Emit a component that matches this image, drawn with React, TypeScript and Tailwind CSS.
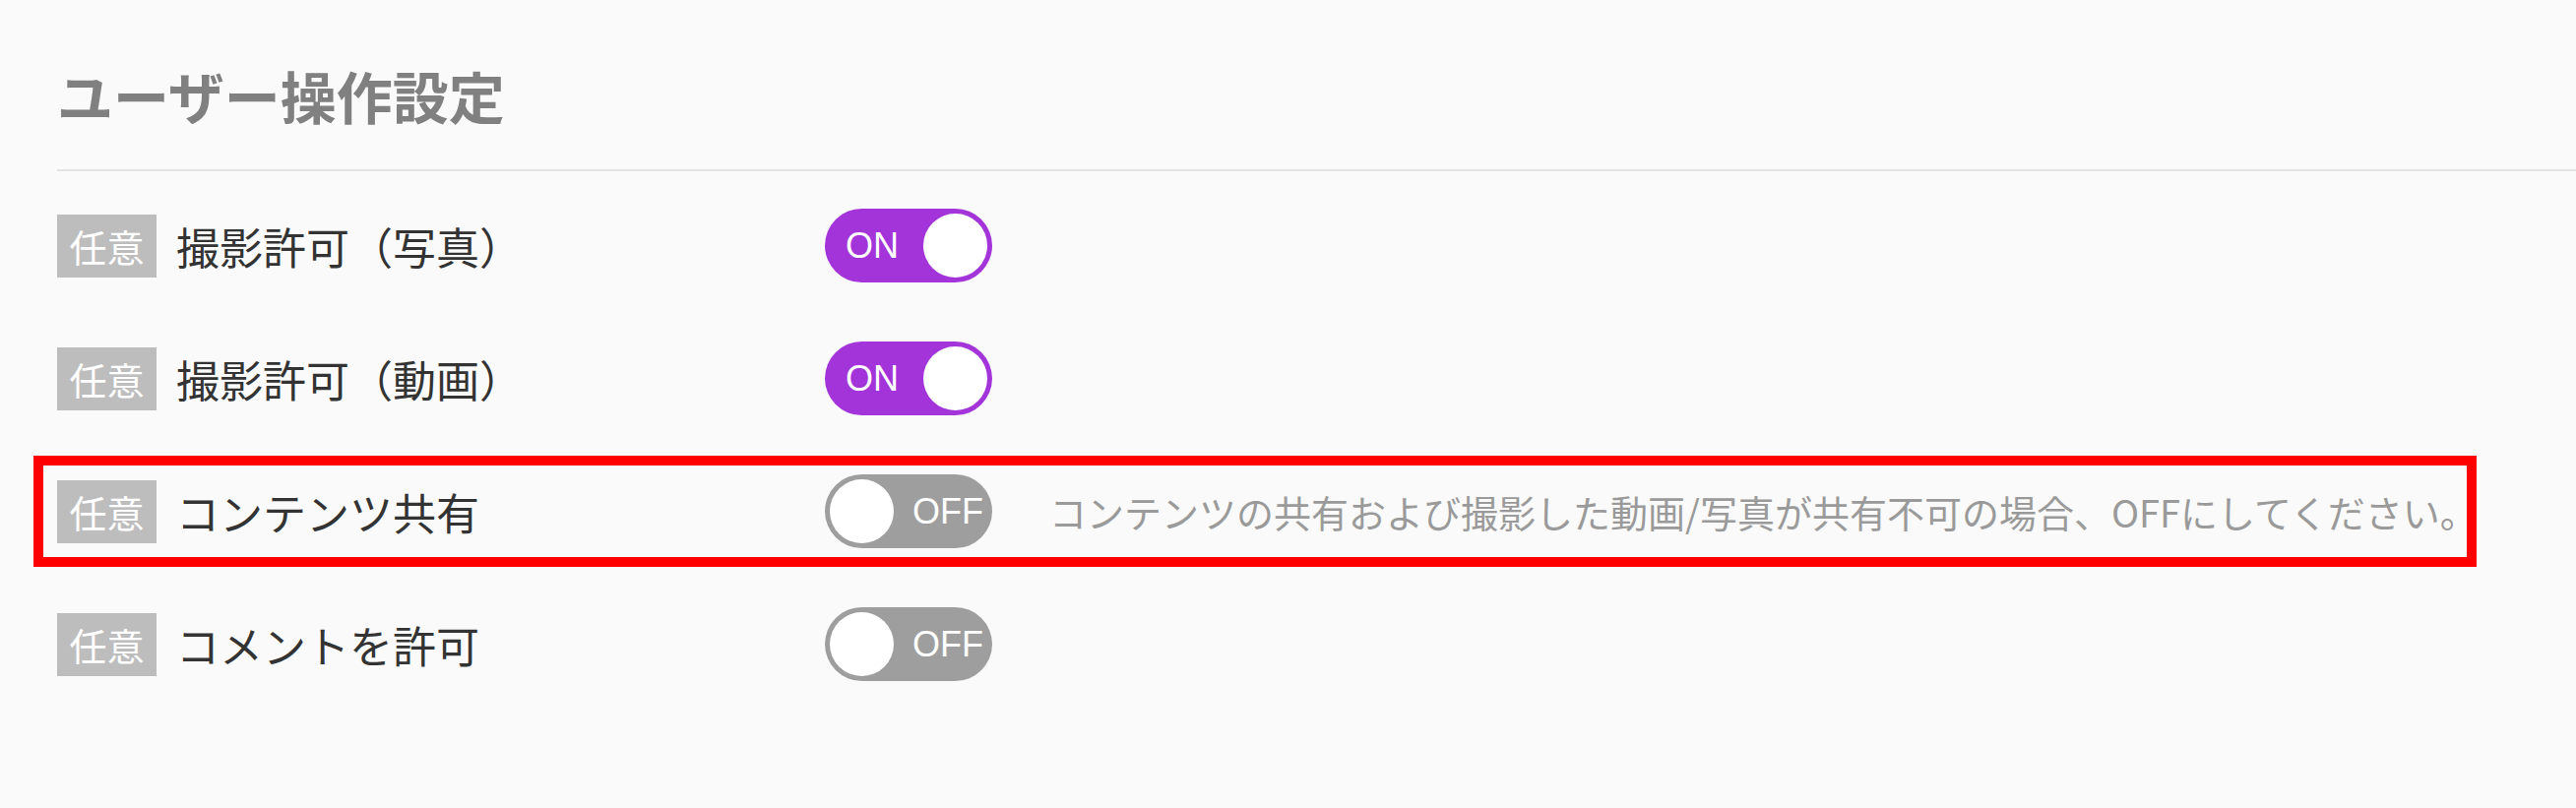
import React from "react";

const JP = { fontFamily: '"Noto Sans CJK JP", "Noto Sans", sans-serif' };

function Toggle({ on }: { on: boolean }) {
  return (
    <div
      className={
        "flex h-[75px] w-[170px] shrink-0 items-center rounded-full p-[5px] " +
        (on ? "bg-[#a334d9] justify-between" : "bg-[#9e9e9e] justify-between")
      }
    >
      {on ? (
        <>
          <span
            className="pl-[16px] text-[36px] leading-none text-white"
            style={{ fontFamily: '"Liberation Sans", Arial, sans-serif' }}
          >
            ON
          </span>
          <span className="h-[65px] w-[65px] rounded-full bg-white" />
        </>
      ) : (
        <>
          <span className="h-[65px] w-[65px] rounded-full bg-white" />
          <span
            className="pr-[4px] text-[36px] leading-none text-white"
            style={{ fontFamily: '"Liberation Sans", Arial, sans-serif' }}
          >
            OFF
          </span>
        </>
      )}
    </div>
  );
}

function RowContent({ label, on, note }: { label: string; on: boolean; note?: string }) {
  return (
    <div className="flex items-center">
      <div className="flex w-[780px] shrink-0 items-center">
        <span className="flex h-[64px] w-[101px] items-center justify-center bg-[#bdbdbd] text-[38px] leading-none text-white">
          任意
        </span>
        <span className="ml-[20px] text-[44px] leading-none text-[#333333]">{label}</span>
      </div>
      <Toggle on={on} />
      {note && (
        <span className="ml-[58px] whitespace-nowrap text-[38px] leading-none text-[#9a9a9a]">{note}</span>
      )}
    </div>
  );
}

export default function App() {
  return (
    <div className="min-h-[821px] w-full bg-[#fafafa] pl-[58px] pt-[56px]" style={JP}>
      <h2 className="h-[80px] text-[57px] font-bold leading-[80px] text-[#808080]">ユーザー操作設定</h2>
      <div className="mt-[36px] h-[2px] bg-[#e3e3e3]" />
      <div className="mt-[8px] flex flex-col">
        <div className="flex h-[135px] items-center">
          <RowContent label="撮影許可（写真）" on={true} />
        </div>
        <div className="flex h-[135px] items-center">
          <RowContent label="撮影許可（動画）" on={true} />
        </div>
        <div className="flex h-[135px] items-center">
          <div className="ml-[-24px] flex h-[113px] w-[2482px] items-center border-[10px] border-[#ff0000] pl-[14px]">
            <RowContent
              label="コンテンツ共有"
              on={false}
              note="コンテンツの共有および撮影した動画/写真が共有不可の場合、OFFにしてください。"
            />
          </div>
        </div>
        <div className="flex h-[135px] items-center">
          <RowContent label="コメントを許可" on={false} />
        </div>
      </div>
    </div>
  );
}
